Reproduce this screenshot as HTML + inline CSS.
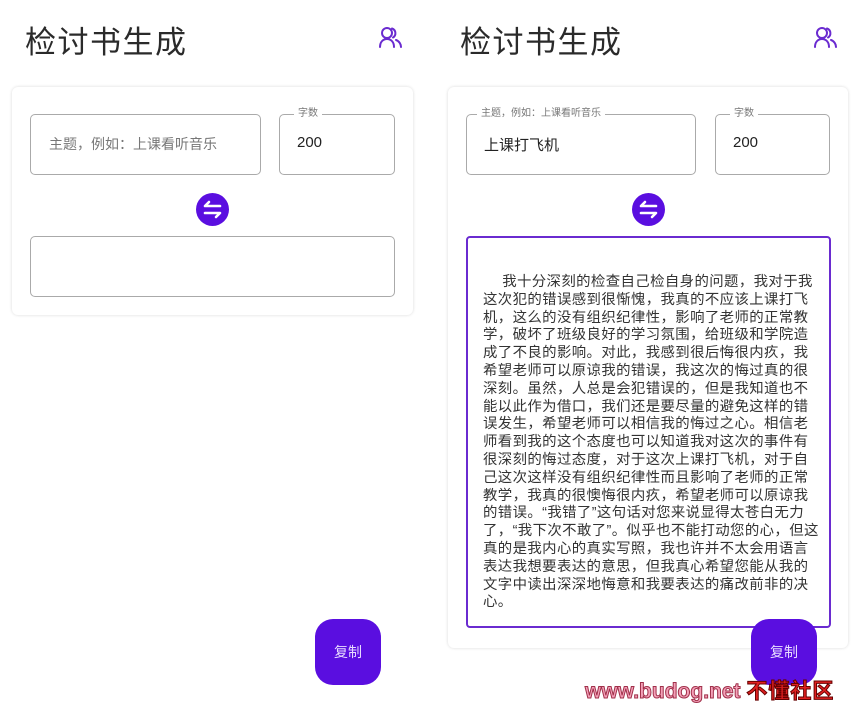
<!DOCTYPE html>
<html><head><meta charset="utf-8"><style>
*{margin:0;padding:0;box-sizing:border-box}
body{width:860px;height:708px;background:#fff;position:relative;overflow:hidden;font-family:"Liberation Sans","Noto Sans CJK SC",sans-serif;color:#333}
.abs{position:absolute}
.title{font-size:31px;color:#2a2a2a;top:17px;letter-spacing:1.5px}
.card{border-radius:6px;box-shadow:0 0 3px rgba(0,0,0,.15);background:#fff}
.box{border:1.5px solid #aaa;border-radius:5px;background:#fff}
.lbl{font-size:10px;color:#777;background:#fff;padding:0 4px;top:-8px;line-height:14px}
.val{font-size:15px;color:#222}
.swap{width:33px;height:33px;border-radius:50%;background:#5a0ee0}
.copy{width:66px;height:66px;border-radius:18px;background:#5a0ee0;color:#e8dcff;font-size:14px;display:flex;align-items:center;justify-content:center}
.txt{font-size:14.4px;line-height:17.8px;color:#333;white-space:nowrap;letter-spacing:0.4px}
</style></head><body>
<div class="abs title" style="left:25px">检讨书生成</div>
<div class="abs title" style="left:460px">检讨书生成</div>
<svg class="abs" style="left:378px;top:26px" width="26" height="24" viewBox="0 0 26 24" fill="none" stroke="#6a2bd0" stroke-width="2" stroke-linecap="round"><circle cx="9" cy="7" r="5"/><path d="M2 21c0-5 3-8 7-8s7 3 7 8"/><path d="M14 2.5a5 5 0 0 1 1 9"/><path d="M18 14c3 1 5 4 5 7"/></svg>
<svg class="abs" style="left:813px;top:26px" width="26" height="24" viewBox="0 0 26 24" fill="none" stroke="#6a2bd0" stroke-width="2" stroke-linecap="round"><circle cx="9" cy="7" r="5"/><path d="M2 21c0-5 3-8 7-8s7 3 7 8"/><path d="M14 2.5a5 5 0 0 1 1 9"/><path d="M18 14c3 1 5 4 5 7"/></svg>

<div class="abs card" style="left:12px;top:87px;width:401px;height:228px"></div>
<div class="abs box" style="left:30px;top:114px;width:231px;height:61px"><div class="abs" style="left:18px;top:19px;font-size:14px;color:#777">主题，例如：上课看听音乐</div></div>
<div class="abs box" style="left:279px;top:114px;width:116px;height:61px"><div class="abs lbl" style="left:14px">字数</div><div class="abs val" style="left:17px;top:19px">200</div></div>
<div class="abs swap" style="left:196px;top:193px"></div>
<svg class="abs" style="left:196px;top:193px" width="33" height="33" viewBox="0 0 33 33" fill="none" stroke="#fff" stroke-width="2.6" stroke-linecap="round" stroke-linejoin="round"><path d="M24 13H9l4-4"/><path d="M9 20h15l-4 4"/></svg>
<div class="abs box" style="left:30px;top:236px;width:365px;height:61px"></div>
<div class="abs copy" style="left:315px;top:619px">复制</div>

<div class="abs card" style="left:448px;top:87px;width:400px;height:561px"></div>
<div class="abs box" style="left:466px;top:114px;width:230px;height:61px"><div class="abs lbl" style="left:10px">主题，例如：上课看听音乐</div><div class="abs val" style="left:17px;top:19px">上课打飞机</div></div>
<div class="abs box" style="left:715px;top:114px;width:115px;height:61px"><div class="abs lbl" style="left:14px">字数</div><div class="abs val" style="left:17px;top:19px">200</div></div>
<div class="abs swap" style="left:632px;top:193px"></div>
<svg class="abs" style="left:632px;top:193px" width="33" height="33" viewBox="0 0 33 33" fill="none" stroke="#fff" stroke-width="2.6" stroke-linecap="round" stroke-linejoin="round"><path d="M24 13H9l4-4"/><path d="M9 20h15l-4 4"/></svg>
<div class="abs" style="left:466px;top:236px;width:365px;height:392px;border:2px solid #6a2bd0;border-radius:4px"></div>
<div class="abs txt" style="left:483px;top:274px">　 我十分深刻的检查自己检自身的问题，我对于我<br>这次犯的错误感到很惭愧，我真的不应该上课打飞<br>机，这么的没有组织纪律性，影响了老师的正常教<br>学，破坏了班级良好的学习氛围，给班级和学院造<br>成了不良的影响。对此，我感到很后悔很内疚，我<br>希望老师可以原谅我的错误，我这次的悔过真的很<br>深刻。虽然，人总是会犯错误的，但是我知道也不<br>能以此作为借口，我们还是要尽量的避免这样的错<br>误发生，希望老师可以相信我的悔过之心。相信老<br>师看到我的这个态度也可以知道我对这次的事件有<br>很深刻的悔过态度，对于这次上课打飞机，对于自<br>己这次这样没有组织纪律性而且影响了老师的正常<br>教学，我真的很懊悔很内疚，希望老师可以原谅我<br>的错误。“我错了”这句话对您来说显得太苍白无力<br>了，“我下次不敢了”。似乎也不能打动您的心，但这<br>真的是我内心的真实写照，我也许并不太会用语言<br>表达我想要表达的意思，但我真心希望您能从我的<br>文字中读出深深地悔意和我要表达的痛改前非的决<br>心。</div>
<div class="abs copy" style="left:751px;top:619px">复制</div>
<div class="abs" style="left:585px;top:675px;font-size:21px;font-weight:bold;color:#f4a0b8;-webkit-text-stroke:1px #a0304a;letter-spacing:0px;white-space:nowrap">www.budog.net <span style="color:#e02020;-webkit-text-stroke:1px #600;letter-spacing:1px">不懂社区</span></div>
</body></html>
